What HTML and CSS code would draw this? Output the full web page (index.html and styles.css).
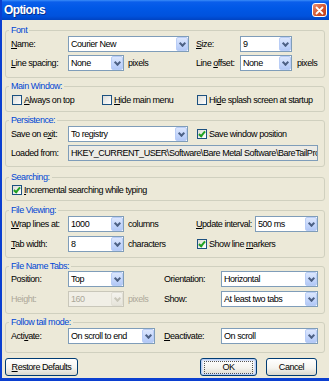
FILE: index.html
```html
<!DOCTYPE html>
<html lang="en">

<head>
    <meta charset="UTF-8">
    <link rel="stylesheet" href="styles.css">
    <title>Options</title>
</head>

<body>
    <div class="window">
        <div class="titlebar">
            <span class="title">Options</span>
            <span class="close">
                <svg width="9" height="9" viewBox="0 0 9 9"><path d="M1.5 1.5 L7.5 7.5 M7.5 1.5 L1.5 7.5" stroke="#fff" stroke-width="1.8" stroke-linecap="round"/></svg>
            </span>
        </div>

        <div class="group g-font">
            <span class="legend">Font</span>
            <div class="row">
                <div class="col-l">
                    <span class="lbl"><u>N</u>ame:</span>
                    <div class="combo w121"><span class="val">Courier New</span><span class="drop"></span></div>
                </div>
                <div class="col-r">
                    <span class="lbl w44"><u>S</u>ize:</span>
                    <div class="combo w52"><span class="val">9</span><span class="drop"></span></div>
                </div>
            </div>
            <div class="row">
                <div class="col-l">
                    <span class="lbl"><u>L</u>ine spacing:</span>
                    <div class="combo w56"><span class="val">None</span><span class="drop"></span></div>
                    <span class="unit">pixels</span>
                </div>
                <div class="col-r">
                    <span class="lbl w44">Line <u>o</u>ffset:</span>
                    <div class="combo w52"><span class="val">None</span><span class="drop"></span></div>
                    <span class="unit u5">pixels</span>
                </div>
            </div>
        </div>

        <div class="group g-main">
            <span class="legend">Main Window:</span>
            <div class="row">
                <div class="col-l">
                    <label class="chk w90"><span class="box"></span><span><u>A</u>lways on top</span></label>
                    <label class="chk"><span class="box"></span><span><u>H</u>ide main menu</span></label>
                </div>
                <div class="col-r">
                    <label class="chk"><span class="box"></span><span>Hi<u>d</u>e splash screen at startup</span></label>
                </div>
            </div>
        </div>

        <div class="group g-persist">
            <span class="legend">Persistence:</span>
            <div class="row">
                <div class="col-l">
                    <span class="lbl">Save on e<u>x</u>it:</span>
                    <div class="combo w120"><span class="val">To registry</span><span class="drop"></span></div>
                </div>
                <div class="col-r">
                    <label class="chk"><span class="box on"></span><span>Save window position</span></label>
                </div>
            </div>
            <div class="row">
                <span class="lbl">Loaded from:</span>
                <div class="edit">HKEY_CURRENT_USER\Software\Bare Metal Software\BareTailPro</div>
            </div>
        </div>

        <div class="group g-search">
            <span class="legend">Searching:</span>
            <div class="row">
                <label class="chk"><span class="box on"></span><span><u>I</u>ncremental searching while typing</span></label>
            </div>
        </div>

        <div class="group g-view">
            <span class="legend">File Viewing:</span>
            <div class="row">
                <div class="col-l">
                    <span class="lbl"><u>W</u>rap lines at:</span>
                    <div class="combo w56"><span class="val">1000</span><span class="drop"></span></div>
                    <span class="unit">columns</span>
                </div>
                <div class="col-r">
                    <span class="lbl w59"><u>U</u>pdate interval:</span>
                    <div class="combo w63"><span class="val">500 ms</span><span class="drop"></span></div>
                </div>
            </div>
            <div class="row">
                <div class="col-l">
                    <span class="lbl"><u>T</u>ab width:</span>
                    <div class="combo w56"><span class="val">8</span><span class="drop"></span></div>
                    <span class="unit">characters</span>
                </div>
                <div class="col-r">
                    <label class="chk"><span class="box on"></span><span>Show line <u>m</u>arkers</span></label>
                </div>
            </div>
        </div>

        <div class="group g-tabs">
            <span class="legend">File Name Tabs:</span>
            <div class="row">
                <div class="col-l narrow">
                    <span class="lbl">Position:</span>
                    <div class="combo w56"><span class="val">Top</span><span class="drop"></span></div>
                </div>
                <div class="col-r">
                    <span class="lbl w57">Orientation:</span>
                    <div class="combo w97"><span class="val">Horizontal</span><span class="drop"></span></div>
                </div>
            </div>
            <div class="row">
                <div class="col-l narrow">
                    <span class="lbl dis">Height:</span>
                    <div class="combo w56 off"><span class="val">160</span><span class="drop"></span></div>
                    <span class="unit dis">pixels</span>
                </div>
                <div class="col-r">
                    <span class="lbl w57">Show:</span>
                    <div class="combo w97"><span class="val">At least two tabs</span><span class="drop"></span></div>
                </div>
            </div>
        </div>

        <div class="group g-tail">
            <span class="legend">Follow tail mode:</span>
            <div class="row">
                <div class="col-l narrow">
                    <span class="lbl">Acti<u>v</u>ate:</span>
                    <div class="combo w87"><span class="val">On scroll to end</span><span class="drop"></span></div>
                </div>
                <div class="col-r">
                    <span class="lbl w57"><u>D</u>eactivate:</span>
                    <div class="combo w97"><span class="val">On scroll</span><span class="drop"></span></div>
                </div>
            </div>
        </div>

        <div class="buttons">
            <button class="btn btn-restore"><u>R</u>estore Defaults</button>
            <button class="btn btn-ok"><span class="focus">OK</span></button>
            <button class="btn btn-cancel">Cancel</button>
        </div>
    </div>
</body>

</html>
```

FILE: styles.css
```css
* {
    box-sizing: border-box;
}

body {
    margin: 0;
    background: #ECE9D8;
    font-family: "Liberation Sans", Arial, sans-serif;
    font-size: 9px;
    letter-spacing: -0.45px;
    color: #000;
}

.window {
    width: 329px;
    height: 381px;
    background: #ECE9D8;
    border-left: 2px solid #0B3FD0;
    border-bottom: 3px solid #0B3FD0;
    overflow: hidden;
}

.titlebar {
    height: 20px;
    display: flex;
    align-items: center;
    justify-content: space-between;
    padding: 0 2px 0 2px;
    background: linear-gradient(#3A8CF8 0, #0A5EEB 2px, #0058E6 40%, #0052DD 80%, #0043C2 100%);
}

.title {
    color: #fff;
    font-weight: bold;
    font-size: 12px;
    letter-spacing: -0.6px;
    text-shadow: 1px 1px 0 #0A2F8C;
}

.close {
    width: 15px;
    height: 14px;
    border: 1px solid #fff;
    border-radius: 3px;
    background: linear-gradient(135deg, #EB8F72, #D4562F 55%, #C23B16);
    display: flex;
    align-items: center;
    justify-content: center;
}

.group {
    position: relative;
    width: 320px;
    margin: 8px 0 0 3px;
    border: 1px solid #D0D0BF;
    border-radius: 3px;
    padding: 5px 6px 5px 5px;
}

.legend {
    position: absolute;
    top: -6px;
    left: 3px;
    padding: 0 2px;
    background: #ECE9D8;
    color: #0046D5;
    line-height: 10px;
}

.g-font {
    margin-top: 10px;
    padding-bottom: 6px;
}

.g-main {
    padding-bottom: 3px;
}

.g-persist {
    padding-bottom: 5px;
}

.g-search {
    margin-top: 10px;
    padding-top: 4px;
    padding-bottom: 2px;
}

.g-view {
    margin-top: 9px;
    padding-bottom: 5px;
}

.g-view .row + .row {
    margin-top: 4px;
}

.g-tabs {
    padding-top: 4px;
    padding-bottom: 6px;
}

.g-tabs .row + .row {
    margin-top: 4px;
}

.g-tail {
    padding-bottom: 8px;
}

.row {
    display: flex;
    align-items: center;
    height: 16px;
}

.row + .row {
    margin-top: 3px;
}

.col-l {
    width: 185px;
    display: flex;
    align-items: center;
    flex-shrink: 0;
}

.col-l.narrow {
    width: 153px;
}

.col-r {
    display: flex;
    align-items: center;
}

.lbl {
    width: 57px;
    flex-shrink: 0;
    white-space: nowrap;
}

.lbl.w44 { width: 44px; }
.lbl.w59 { width: 59px; }
.lbl.w57 { width: 57px; }

.dis {
    color: #ACA899;
}

.unit {
    margin-left: 4px;
    white-space: nowrap;
}

.unit.u5 {
    margin-left: 5px;
}

.combo {
    display: flex;
    align-items: stretch;
    height: 16px;
    border: 1px solid #7F9DB9;
    background: #fff;
    flex-shrink: 0;
}

.combo .val {
    flex: 1;
    padding-left: 2px;
    line-height: 14px;
    overflow: hidden;
    white-space: nowrap;
}

.drop {
    width: 12px;
    border: 1px solid #B9CDF6;
    border-radius: 2px;
    background: linear-gradient(#DCE7FD, #C3D5FB 60%, #B2C8F6);
    position: relative;
}

.drop::after {
    content: "";
    position: absolute;
    left: 3px;
    top: 3px;
    width: 3px;
    height: 3px;
    border-right: 2px solid #4D6185;
    border-bottom: 2px solid #4D6185;
    transform: rotate(45deg);
}

.combo.off {
    border-color: #C9C7BA;
    background: #F1EFE6;
    color: #ACA899;
}

.combo.off .drop {
    border-color: #E2E0D6;
    background: linear-gradient(#F4F3EE, #E6E4DA);
}

.combo.off .drop::after {
    border-color: #C9C7BA;
}

.w121 { width: 121px; }
.w120 { width: 120px; }
.w56 { width: 56px; }
.w52 { width: 52px; }
.w63 { width: 63px; }
.w87 { width: 87px; }
.w97 { width: 97px; }

.edit {
    width: 250px;
    height: 16px;
    border: 1px solid #7F9DB9;
    background: #ECEBE5;
    padding-left: 2px;
    line-height: 14px;
    overflow: hidden;
    white-space: nowrap;
}

.chk {
    display: flex;
    align-items: center;
    white-space: nowrap;
}

.chk.w90 {
    width: 90px;
}

.box {
    width: 10px;
    height: 10px;
    margin: 0 2px 0 1px;
    border: 1px solid #1C5180;
    background: linear-gradient(135deg, #DCDCD7, #FFFFFF);
    position: relative;
    flex-shrink: 0;
}

.box.on::after {
    content: "";
    position: absolute;
    left: 2px;
    top: 0px;
    width: 2px;
    height: 5px;
    border-right: 2px solid #21A121;
    border-bottom: 2px solid #21A121;
    transform: rotate(40deg);
}

.buttons {
    display: flex;
    width: 312px;
    margin: 5px 0 0 3px;
}

.btn {
    height: 18px;
    padding: 0;
    border: 1px solid #003C74;
    border-radius: 3px;
    background: linear-gradient(#FFFFFF, #F5F4EF 55%, #DCD8CC);
    font: inherit;
    letter-spacing: -0.45px;
    color: #000;
}

.btn-restore {
    width: 73px;
}

.btn-ok {
    width: 57px;
    margin-left: auto;
    box-shadow: inset 0 0 0 1px #B9CDF3, inset 0 0 0 2px #D7E2F8;
}

.btn-ok .focus {
    display: block;
    margin: 0 3px;
    line-height: 11px;
    border: 1px dotted #555;
}

.btn-cancel {
    width: 51px;
    margin-left: 9px;
}
```
